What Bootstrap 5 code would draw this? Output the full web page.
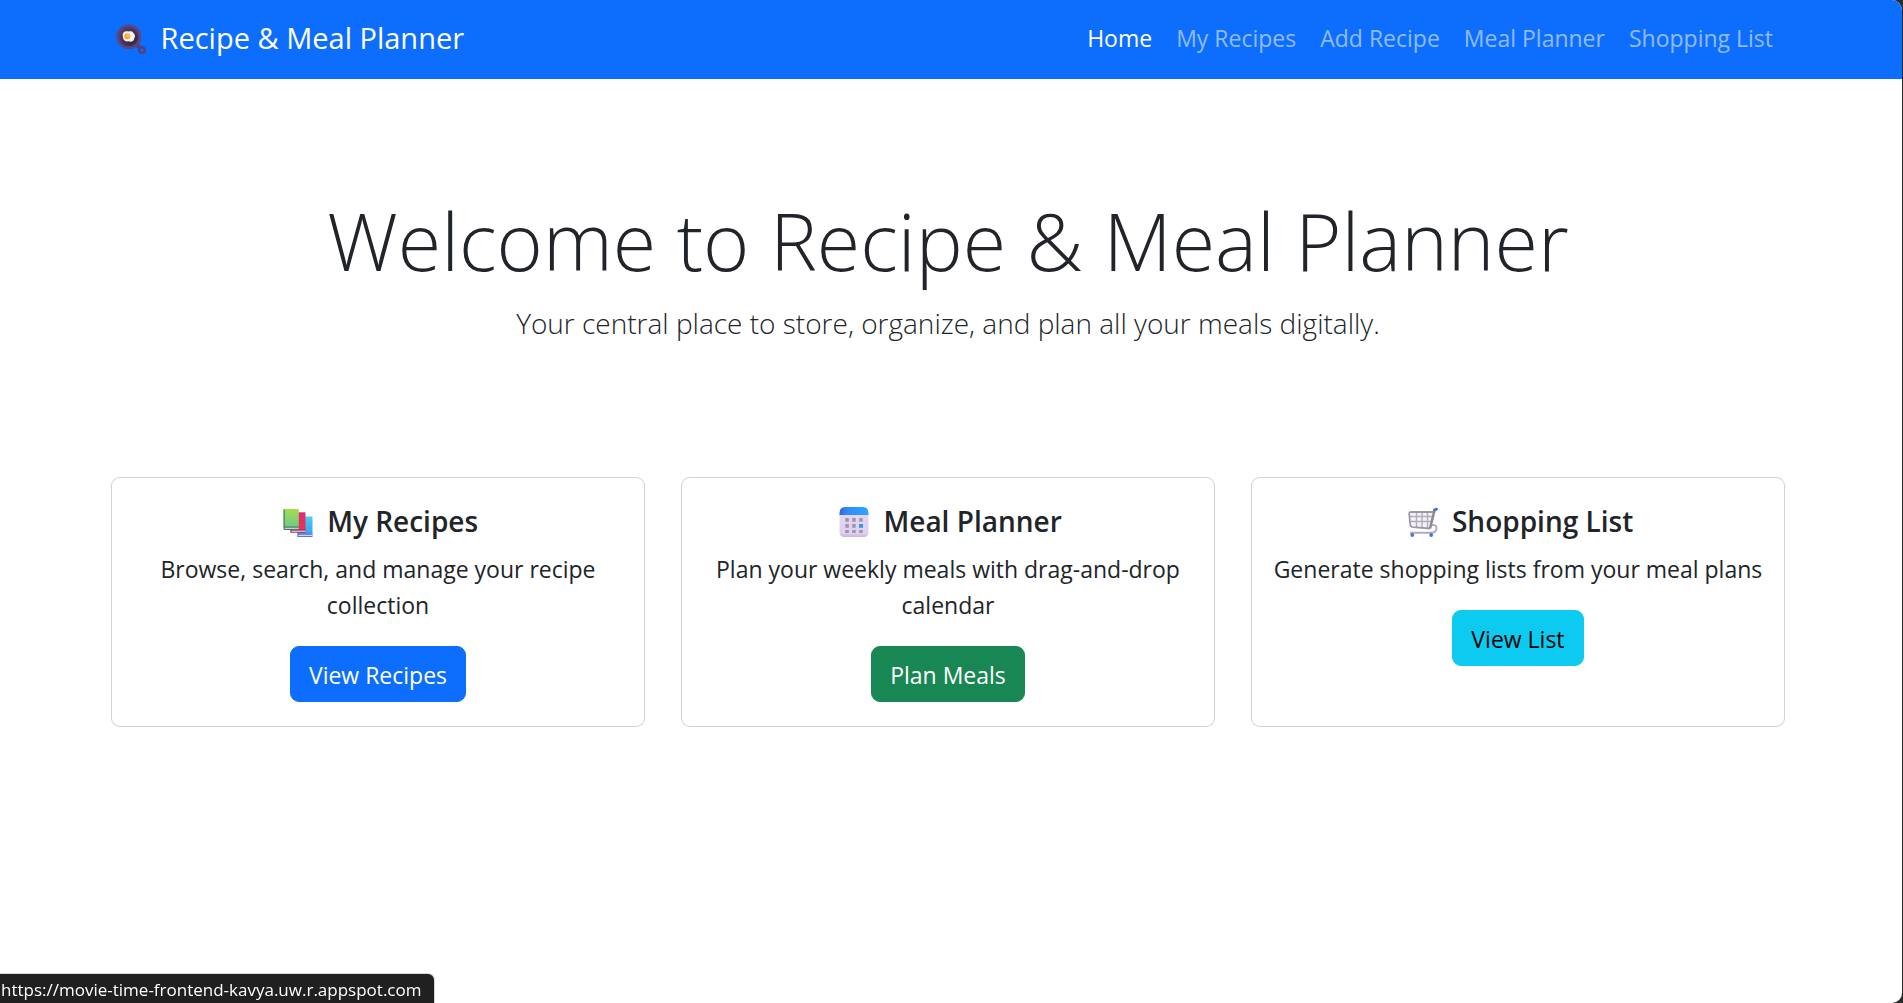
<!DOCTYPE html>
<html lang="en">
<head>
<meta charset="utf-8">
<meta name="viewport" content="width=device-width, initial-scale=1">
<title>Recipe &amp; Meal Planner</title>
<link href="https://cdn.jsdelivr.net/npm/bootstrap@5.3.0/dist/css/bootstrap.min.css" rel="stylesheet">
<style>
  html { font-size: 24px; background: #2b2b2b; }
  body {
    --bs-body-font-family: "Segoe UI", "Open Sans", "Noto Sans", sans-serif;
    background: #2b2b2b;
    font-size: 23px;
    line-height: 36px;
  }
  .page-view {
    min-height: 100vh;
    margin-right: 1px;
    padding-bottom: 36px;
    background: #fff;
    border-radius: 0 10px 10px 0;
    overflow: hidden;
  }
  .page-band { padding-right: 6px; }
  .page-width { max-width: 1710px; }
  .top-bar { padding-top: 7px; padding-bottom: 12px; }
  .top-bar .navbar-brand { font-size: 29px; line-height: 45px; }
  .top-bar .nav-link { line-height: 36px; padding-top: 13px; padding-bottom: 11px; }
  .hero-title { font-size: 79px; line-height: 107px; margin-bottom: 7px; }
  .hero-text { font-size: 28px; line-height: 45px; margin-bottom: 23px; }
  .tile .card-body { padding: 24px 20px; }
  .tile-title { font-size: 28px; line-height: 38px; font-weight: 600; margin-bottom: 11px; }
  .tile .card-text { font-size: 23px; line-height: 36px; margin-bottom: 23px; }
  .tile .btn { font-size: 23px; line-height: 36px; padding-top: 10px; padding-bottom: 8px; }
  .emoji { width: 30px; height: 30px; margin: 0 7px 0 5px; vertical-align: -5px; }
  .status-tip {
    font-size: 17px;
    line-height: 24px;
    padding: 4px 13px 1px 1px;
    background: #202020;
    border-radius: 0 6px 0 0;
    box-shadow: 0 0 0 1px #d5d5d5;
  }
</style>
<script src="https://cdn.jsdelivr.net/npm/bootstrap@5.3.0/dist/js/bootstrap.bundle.min.js"></script>
</head>
<body>
<div class="page-view">
  <nav class="navbar navbar-expand-lg navbar-dark bg-primary top-bar page-band">
    <div class="container page-width">
      <a class="navbar-brand" href="#"><svg class="emoji" viewBox="0 0 30 30" aria-hidden="true">
        <defs>
          <radialGradient id="pan" cx=".65" cy=".65" r=".7"><stop offset="0" stop-color="#2f2438"/><stop offset="1" stop-color="#4e3d63"/></radialGradient>
          <radialGradient id="yolk" cx=".65" cy=".35" r=".7"><stop offset="0" stop-color="#ffc84a"/><stop offset="1" stop-color="#f09a2c"/></radialGradient>
        </defs>
        <path d="M20 20l4 4" stroke="#54407c" stroke-width="4.5"/>
        <circle cx="26" cy="26" r="2.7" fill="none" stroke="#54407c" stroke-width="2.4"/>
        <circle cx="12.8" cy="12.8" r="12.3" fill="#55407a"/>
        <circle cx="12.8" cy="12.8" r="11.3" fill="none" stroke="#654c88" stroke-width="1"/>
        <circle cx="13" cy="12.8" r="9.3" fill="url(#pan)"/>
        <path d="M7.500 8.500C10 6.500 12 7.800 14 7.300C17 7 17.500 9.300 18.600 10.500C19.800 12.500 18 14 18 15.600C17 18 14.500 18.200 12.500 17.300C10 17.800 7.200 16.500 7 13.500C6.700 11.500 6.300 9.800 7.500 8.500Z" fill="#f6eef8"/>
        <circle cx="11.300" cy="12.200" r="3" fill="url(#yolk)"/>
      </svg> Recipe &amp; Meal Planner</a>
      <button class="navbar-toggler" type="button" data-bs-toggle="collapse" data-bs-target="#mainNav" aria-controls="mainNav" aria-expanded="false" aria-label="Toggle navigation"><span class="navbar-toggler-icon"></span></button>
      <div class="collapse navbar-collapse" id="mainNav">
        <ul class="navbar-nav ms-auto">
          <li class="nav-item"><a class="nav-link active" aria-current="page" href="#">Home</a></li>
          <li class="nav-item"><a class="nav-link" href="#">My Recipes</a></li>
          <li class="nav-item"><a class="nav-link" href="#">Add Recipe</a></li>
          <li class="nav-item"><a class="nav-link" href="#">Meal Planner</a></li>
          <li class="nav-item"><a class="nav-link" href="#">Shopping List</a></li>
        </ul>
      </div>
    </div>
  </nav>

  <main class="page-band mt-4">
    <div class="container page-width">
      <div class="text-center py-5">
        <h1 class="display-4 hero-title">Welcome to Recipe &amp; Meal Planner</h1>
        <p class="lead hero-text">Your central place to store, organize, and plan all your meals digitally.</p>
      </div>
      <div class="row mt-4 gy-4 gy-md-0">
        <div class="col-md-4">
          <div class="card tile text-center h-100">
            <div class="card-body">
              <h5 class="card-title tile-title"><svg class="emoji" viewBox="0 0 30 30" aria-hidden="true">
                <defs>
                  <linearGradient id="green" x2="0" y2="1"><stop offset="0" stop-color="#a5dc4f"/><stop offset="1" stop-color="#6fcb84"/></linearGradient>
                  <linearGradient id="rose" x2="0" y2="1"><stop offset="0" stop-color="#dc2c78"/><stop offset="1" stop-color="#e8364c"/></linearGradient>
                  <linearGradient id="sky" x2="0" y2="1"><stop offset="0" stop-color="#50ccf4"/><stop offset="1" stop-color="#38a3ee"/></linearGradient>
                </defs>
                <path d="M14.500 9.500H29.500V27H14.500Z" fill="url(#sky)"/>
                <path d="M14.300 26.500H29.500V30H14.300Z" fill="#5779cc"/><path d="M15.500 27.800H29.500V29H15.500Z" fill="#d8d5f4"/>
                <path d="M7.500 5.300H22.500V23H7.500Z" fill="url(#rose)"/>
                <path d="M7.300 22.500H22.500V25.700H7.300Z" fill="#a62562"/><path d="M8.500 23.600H22.500V24.800H8.500Z" fill="#ead3ea"/>
                <path d="M.5 3Q.5 2 1.500 2H15.800V20H.5Z" fill="url(#green)"/>
                <path d="M.5 2.500H2V20H.5Z" fill="#459e5c"/>
                <path d="M.5 19.500H15.800V23H1.500Q.5 23 .5 22Z" fill="#46795c"/><path d="M1.700 20.700H15.800V21.900H1.700Z" fill="#ded3ef"/>
              </svg> My Recipes</h5>
              <p class="card-text">Browse, search, and manage your recipe collection</p>
              <a class="btn btn-primary" href="#">View Recipes</a>
            </div>
          </div>
        </div>
        <div class="col-md-4">
          <div class="card tile text-center h-100">
            <div class="card-body">
              <h5 class="card-title tile-title"><svg class="emoji" viewBox="0 0 30 30" aria-hidden="true">
                <defs>
                  <linearGradient id="calTop"><stop offset="0" stop-color="#3c62d8"/><stop offset=".3" stop-color="#2f8df8"/><stop offset="1" stop-color="#2ea6fb"/></linearGradient>
                  <linearGradient id="calBody" x2="0" y2="1"><stop offset="0" stop-color="#e3d8ef"/><stop offset=".85" stop-color="#dfd0ed"/><stop offset="1" stop-color="#c9aee6"/></linearGradient>
                </defs>
                <path d="M.5 7H29.500V25Q29.500 30 24.500 30H5.500Q.5 30 .5 25Z" fill="url(#calBody)"/>
                <path d="M.5 8V6Q.5 0 6.500 0H23.500Q29.500 0 29.500 6V8Z" fill="url(#calTop)"/>
                <path d="M6.300 11h3.500v3.800h-3.500zM13.200 11h3.500v3.800h-3.500zM20.200 11h3.500v3.800h-3.500zM6.300 17h3.500v3.800h-3.500zM13.200 17h3.500v3.800h-3.500zM6.300 23h3.500v3h-3.500zM13.200 23h3.500v3h-3.500zM20.200 23h3.500v3h-3.500z" fill="#a093b0"/>
                <path d="M20 17h4v3.800h-4z" fill="#2f98f7"/>
              </svg> Meal Planner</h5>
              <p class="card-text">Plan your weekly meals with drag-and-drop calendar</p>
              <a class="btn btn-success" href="#">Plan Meals</a>
            </div>
          </div>
        </div>
        <div class="col-md-4">
          <div class="card tile text-center h-100">
            <div class="card-body">
              <h5 class="card-title tile-title"><svg class="emoji" viewBox="0 0 30 30" fill="none" aria-hidden="true">
                <path d="M1.500 5.500H25L22 20.500L4 19.500Z" fill="#f3f1f5"/>
                <path d="M2 9.500H24M2.500 14.500H23M8.500 5.500V20M14 5.500V20.500M19.500 5.500V21" stroke="#b3afba" stroke-width="1.400"/>
                <path d="M25 5H3Q1 5 1.200 7L2.300 18Q2.600 20 4.600 20.200L22 21.500" stroke="#9d98a3" stroke-width="1.800"/>
                <path d="M28 2.500L26.500 3.500L22 21.500" stroke="#8d8792" stroke-width="2.500"/>
                <path d="M24 18Q28.600 17.500 28.500 21Q28.500 25.800 23 25.800H2" stroke="#b5a6c4" stroke-width="1.900"/>
                <path d="M26.500 2.800L28.500 2.200" stroke="#3f7cc9" stroke-width="2.900" stroke-linecap="round"/>
                <circle cx="4.300" cy="28" r="1.900" fill="#3f7cd0"/><circle cx="23.200" cy="28" r="1.900" fill="#3f7cd0"/>
              </svg> Shopping List</h5>
              <p class="card-text">Generate shopping lists from your meal plans</p>
              <a class="btn btn-info" href="#">View List</a>
            </div>
          </div>
        </div>
      </div>
    </div>
  </main>
</div>
<div class="status-tip position-fixed bottom-0 start-0 text-white">https://movie-time-frontend-kavya.uw.r.appspot.com</div>
</body>
</html>
